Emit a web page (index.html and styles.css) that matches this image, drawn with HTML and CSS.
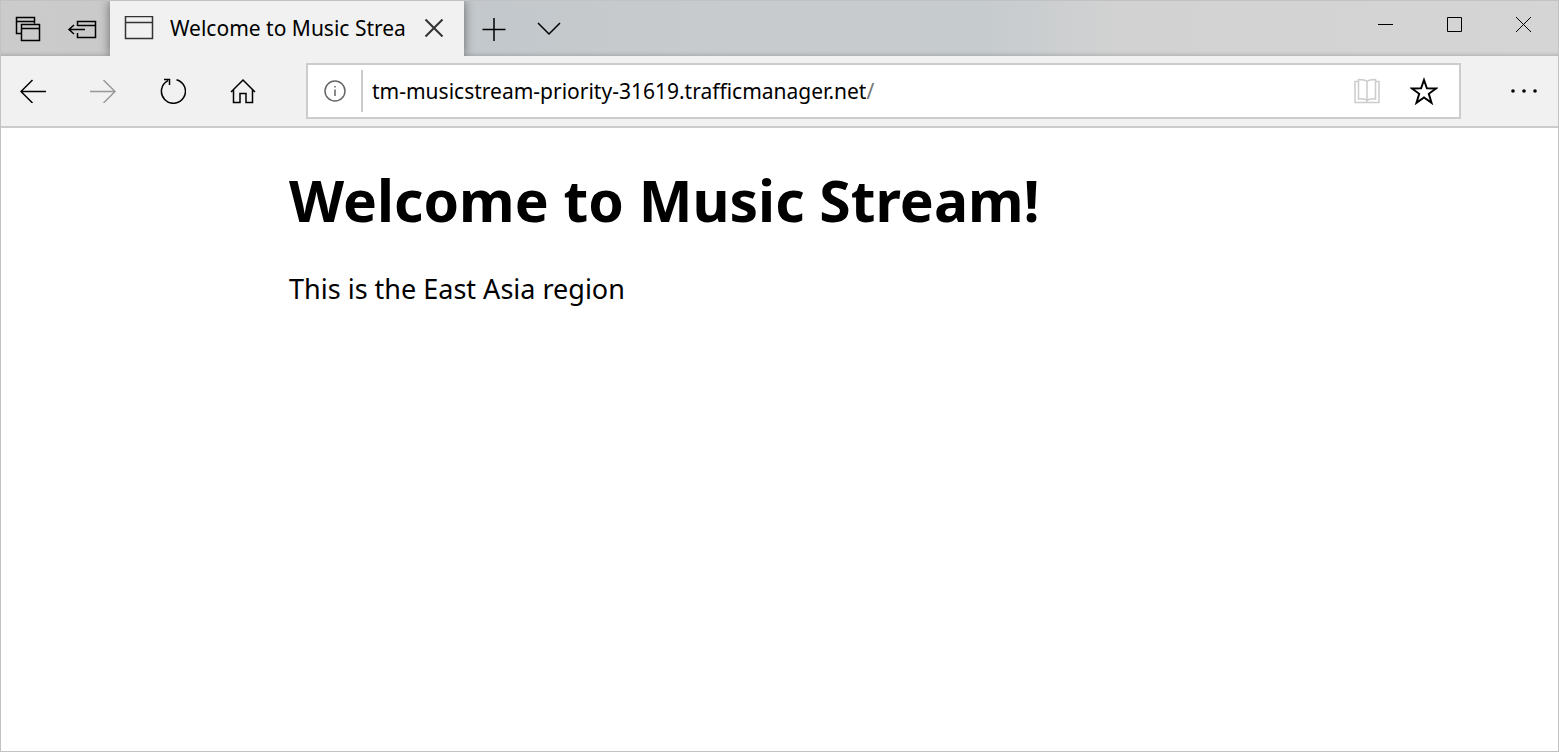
FILE: index.html
```html
<!DOCTYPE html>
<html lang="en">
<head>
<meta charset="utf-8">
<meta name="viewport" content="width=device-width, initial-scale=1">
<title>Welcome to Music Stream!</title>
<link rel="stylesheet" href="styles.css">
</head>
<body>
<div class="window">
  <header class="tab-strip">
    <button class="strip-button" type="button" aria-label="Tabs you've set aside">
      <svg width="26" height="26" viewBox="0 0 26 26"><path d="M6 17.500H1.500V1.500h18v6M1.500 5.500h18M6.500 8.500h18v16H6.500zM6.500 12.500h18"/></svg>
    </button>
    <button class="strip-button" type="button" aria-label="Set these tabs aside">
      <svg width="30" height="26" viewBox="0 0 30 26"><path d="M10.500 10V5.500h18v16h-18V17M10.500 9.500h18M2 13.500h16M7 9l-5 4.500L7 18"/></svg>
    </button>
    <div class="tab">
      <svg class="tab-icon" width="30" height="24" viewBox="0 0 30 24"><path d="M1.500.500h27v22h-27zM1.500 6.500h27"/></svg>
      <span class="tab-title">Welcome to Music Stream!</span>
      <button class="tab-close" type="button" aria-label="Close tab">
        <svg width="20" height="20" viewBox="0 0 20 20"><path d="M1.500 1.500l17 17M18.500 1.500l-17 17"/></svg>
      </button>
    </div>
    <div class="strip-rest">
      <button class="strip-button" type="button" aria-label="New tab">
        <svg width="24" height="24" viewBox="0 0 24 24"><path d="M12 1v23M.500 12.500h23"/></svg>
      </button>
      <button class="strip-button" type="button" aria-label="Show tab previews">
        <svg width="24" height="14" viewBox="0 0 24 14"><path d="M1 1l11 11L23 1"/></svg>
      </button>
      <div class="window-controls">
        <button type="button" aria-label="Minimize">
          <svg width="15" height="15" viewBox="0 0 15 15"><path d="M0 7.500h15"/></svg>
        </button>
        <button type="button" aria-label="Maximize">
          <svg width="15" height="15" viewBox="0 0 15 15"><path d="M.5.5h14v14H.5z"/></svg>
        </button>
        <button type="button" aria-label="Close">
          <svg width="15" height="15" viewBox="0 0 15 15"><path d="M0 0l15 15M15 0L0 15"/></svg>
        </button>
      </div>
    </div>
  </header>
  <nav class="toolbar">
    <div class="nav-buttons">
      <button type="button" aria-label="Back">
        <svg width="26" height="24" viewBox="0 0 26 24"><path d="M26 12.500H1M12.500 1L1 12.500 12.500 24"/></svg>
      </button>
      <button type="button" aria-label="Forward" disabled>
        <svg width="26" height="24" viewBox="0 0 26 24"><path d="M0 12.500h25M13.500 1L25 12.500 13.500 24"/></svg>
      </button>
      <button type="button" aria-label="Refresh">
        <svg width="26" height="26" viewBox="0 0 26 26"><path d="M16.500 1.700A12 12 0 1 1 8 2.600M4 1.500H9.500V7"/></svg>
      </button>
      <button type="button" aria-label="Home">
        <svg width="26" height="26" viewBox="0 0 26 26"><path d="M1 14L13 2l12 12M3.500 12v12.500h6.500v-9h6v9h6.500V12"/></svg>
      </button>
    </div>
    <div class="address-box">
      <button class="site-info" type="button" aria-label="Site information">
        <svg width="22" height="22" viewBox="0 0 22 22"><circle cx="11" cy="11" r="10"/><path d="M11 9.500v6.500M11 6v1.500"/></svg>
      </button>
      <label class="url">
        <input type="text" aria-label="Address" size="45" value="tm-musicstream-priority-31619.trafficmanager.net"><span class="url-path">/</span>
      </label>
      <button class="reading" type="button" aria-label="Reading view" disabled>
        <svg width="26" height="26" viewBox="0 0 26 26"><path d="M4 3.500H1v21h24v-21h-3M13 3.500C11 1.500 8 1.500 4.500 1.500v19.500C8 20.500 11 20.500 13 22.500c2-2 5-2 8.500-1.500V1.500c-3.500 0-6.500 0-8.500 2zM13 3.500V24"/></svg>
      </button>
      <button class="favorite" type="button" aria-label="Add to favorites">
        <svg width="28" height="28" viewBox="0 0 28 28"><path d="M14 3l2.900 8.300 9.200.2-7.300 5.300 2.700 9L14 20.500l-7.500 5.300 2.700-9L1.900 11.500l9.200-.2z"/></svg>
      </button>
    </div>
    <button class="more" type="button" aria-label="Settings and more">
      <svg width="26" height="4" viewBox="0 0 26 4"><circle cx="2" cy="2" r="1.800"/><circle cx="13" cy="2" r="1.800"/><circle cx="24" cy="2" r="1.800"/></svg>
    </button>
  </nav>
  <main class="page">
    <h1>Welcome to Music Stream!</h1>
    <p>This is the East Asia region</p>
  </main>
</div>
</body>
</html>
```
FILE: styles.css
```css
* { box-sizing: border-box; }

body {
  margin: 0;
  background: #fff;
  color: #000;
  font-family: "Noto Sans", sans-serif;
}

.window {
  min-height: 100vh;
  border: 1px solid #c2c2c2;
  display: flex;
  flex-direction: column;
}

button {
  padding: 0;
  border: 0;
  background: none;
  color: inherit;
  display: flex;
  align-items: center;
  justify-content: center;
}

svg {
  display: block;
  flex: none;
  fill: none;
  stroke: currentColor;
  stroke-width: 1.5;
}

.tab-strip {
  height: 55px;
  display: flex;
  background: linear-gradient(90deg, #cbcbcb 0, #cacaca 7%, #c3c8cc 32%, #c8cbcd 46%, #c6cbce 63%, #d2d2d2 72%, #d5d5d5 100%);
  box-shadow: inset 0 -5px 4px -4px #00000030;
}

.strip-button {
  width: 55px;
  padding-right: 1px;
}

.strip-button:first-child { width: 54px; }

.tab {
  z-index: 1;
  width: 354px;
  padding: 0 16px 2px 14px;
  display: flex;
  align-items: center;
  background: #f1f1f1;
  box-shadow: 0 0 10px #00000080;
  clip-path: inset(0 -12px);
}

.tab-icon { color: #333; }

.tab-title {
  flex: 1;
  margin: 0 14px 0 16px;
  overflow: hidden;
  white-space: nowrap;
  font-size: 21px;
  line-height: 32px;
}

.tab-close {
  width: 28px;
  height: 32px;
  color: #333;
}

.tab-close svg { stroke-width: 2; }

.strip-rest {
  flex: 1;
  padding-left: 3px;
  display: flex;
}

.strip-rest > .strip-button:first-child { width: 55px; }

.window-controls {
  margin-left: auto;
  height: 47px;
  display: flex;
}

.window-controls button { width: 69px; }

.window-controls svg { stroke-width: 1; }

.toolbar {
  height: 72px;
  display: flex;
  align-items: center;
  background: #f1f1f1;
  border-bottom: 2px solid #ccc;
}

.nav-buttons {
  padding-left: 1px;
  display: flex;
  gap: 8px;
}

.nav-buttons button {
  width: 62px;
  height: 56px;
}

.nav-buttons button:disabled { color: #999; }

.address-box {
  flex: 1;
  height: 56px;
  margin: 0 29px 0 32px;
  padding-right: 21px;
  display: flex;
  align-items: center;
  background: #fff;
  border: 2px solid #ccc;
}

.site-info {
  width: 55px;
  height: 42px;
  border-right: 2px solid #ccc;
  color: #666;
}

.url {
  flex: 1;
  display: flex;
  padding-left: 9px;
  font-size: 21px;
  line-height: 32px;
}

.url input {
  field-sizing: content;
  padding: 0;
  border: 0;
  outline: 0;
  background: none;
  color: #000;
  font: inherit;
}

.url-path { color: #777; }

.reading {
  margin-right: 30px;
  color: #ccc;
}

.favorite svg { stroke-width: 2; }

.more {
  width: 68px;
  height: 56px;
}

.more svg {
  fill: currentColor;
  stroke: none;
}

.page {
  width: 63%;
  margin: 0 auto;
}

.page h1 {
  margin: 34px 0 0;
  font-size: 57px;
  line-height: 76px;
}

.page p {
  margin: 31px 0 0;
  font-size: 27px;
  line-height: 40px;
}
```
